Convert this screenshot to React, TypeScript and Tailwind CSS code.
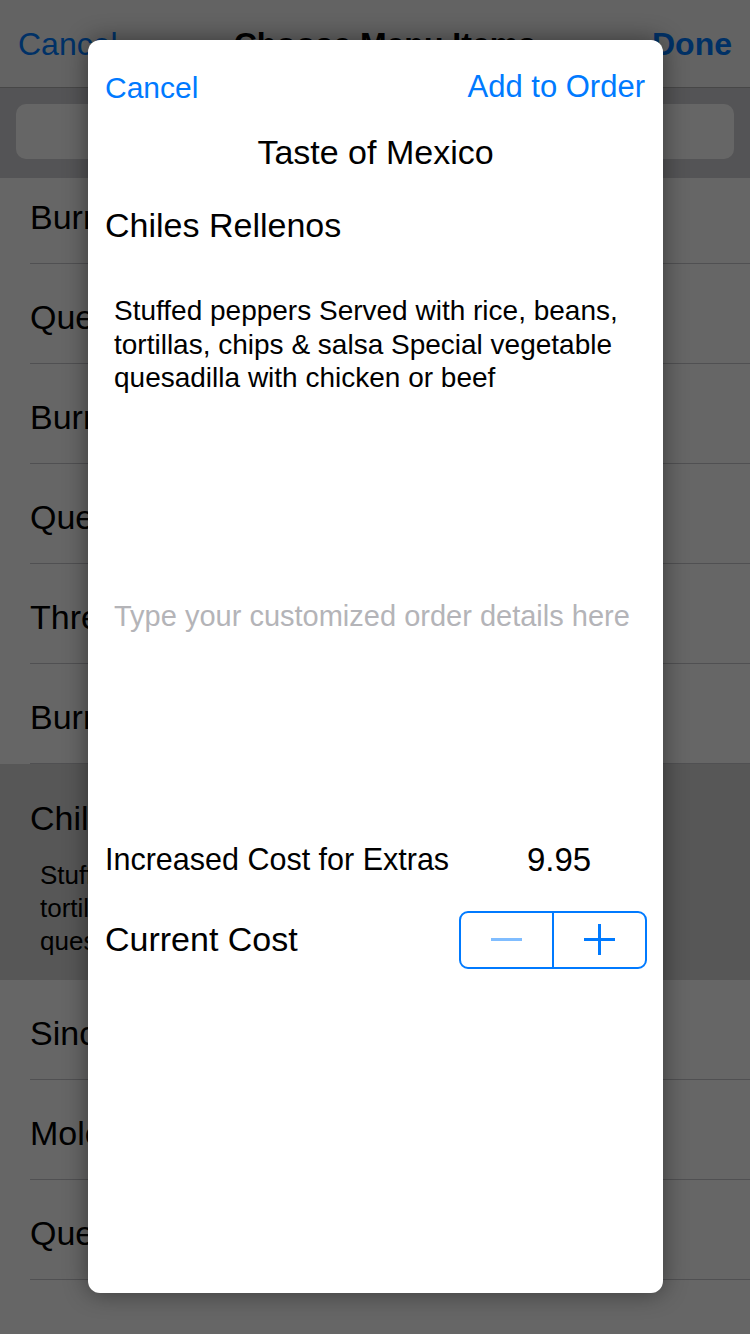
const rows = [
  "Burrito Supreme",
  "Quesadilla",
  "Burrito Mexicano",
  "Quesadilla Suprema",
  "Three Tacos",
  "Burrito Grande",
]

const moreRows = ["Sincronizadas", "Mole Poblano", "Quesadilla Fajita"]

function MenuRow({ name, first }: { name: string; first?: boolean }) {
  return (
    <div className={`${first ? "h-[86px]" : "h-[100px]"} pl-[30px] flex`}>
      <div
        className={`flex-1 flex items-center border-b border-[#c8c7cc] text-[34px] text-black ${
          first ? "pb-[6px]" : "pt-[8px]"
        }`}
      >
        {name}
      </div>
    </div>
  )
}

function Stepper() {
  return (
    <div className="flex w-[188px] h-[58px] border-2 border-[#007aff] rounded-[9px]">
      <div className="flex-1 flex items-center justify-center border-r-2 border-[#007aff]">
        <div className="w-[31px] h-[3px] bg-[#80bdff]" />
      </div>
      <div className="flex-1 flex items-center justify-center">
        <div className="relative w-[31px] h-[31px]">
          <div className="absolute left-0 top-[14px] w-[31px] h-[3px] bg-[#007aff]" />
          <div className="absolute top-0 left-[14px] w-[3px] h-[31px] bg-[#007aff]" />
        </div>
      </div>
    </div>
  )
}

export default function App() {
  return (
    <div className="relative w-[750px] h-[1334px] overflow-hidden bg-white font-['Liberation_Sans',Arial,sans-serif]">
      {/* page underneath */}
      <div className="flex items-center justify-between h-[88px] px-[18px] bg-[#f7f7f7] border-b border-[#b2b2b2]">
        <span className="text-[32px] text-[#007aff]">Cancel</span>
        <span className="text-[32px] font-bold text-black">Choose Menu Items</span>
        <span className="text-[32px] font-bold text-[#007aff]">Done</span>
      </div>
      <div className="h-[90px] px-[16px] pt-[16px] bg-[#d2d2d6]">
        <div className="h-[55px] rounded-[10px] bg-white" />
      </div>
      <div className="flex flex-col">
        {rows.map((r, i) => (
          <MenuRow key={r} name={r} first={i === 0} />
        ))}
        <div className="h-[216px] bg-[#d9d9d9] pl-[30px] pt-[34px]">
          <div className="text-[34px] leading-[40px] text-black">Chiles Rellenos</div>
          <div className="mt-[21px] pl-[10px] w-[560px] text-[26px] leading-[33px] text-black">
            Stuffed peppers Served with rice, beans, tortillas, chips &amp; salsa Special vegetable
            quesadilla with chicken or beef
          </div>
        </div>
        {moreRows.map((r) => (
          <MenuRow key={r} name={r} />
        ))}
      </div>

      {/* dim */}
      <div className="absolute inset-0 bg-black/60" />

      {/* modal */}
      <div className="absolute left-[88px] top-[40px] w-[575px] h-[1253px] rounded-[12px] bg-white shadow-[0_0_24px_rgba(0,0,0,0.45)] px-[17px] pt-[27px] flex flex-col">
        <div className="h-[40px] flex items-center justify-between text-[30px] text-[#007aff]">
          <span>Cancel</span>
          <span className="mr-[1px] text-[31px]">Add to Order</span>
        </div>
        <div className="mt-[25px] h-[40px] leading-[40px] text-center text-[34px] text-black">
          Taste of Mexico
        </div>
        <div className="mt-[33px] h-[40px] leading-[40px] text-[34px] text-black">
          Chiles Rellenos
        </div>
        <p className="mt-[49px] pl-[9px] pr-[10px] text-[28px] leading-[33.5px] text-black">
          Stuffed peppers Served with rice, beans, tortillas, chips &amp; salsa Special vegetable
          quesadilla with chicken or beef
        </p>
        <div className="mt-[204px] pl-[9px] h-[34px] leading-[34px] text-[29px] text-[#b4b4b8]">
          Type your customized order details here
        </div>
        <div className="mt-[207px] h-[40px] flex items-center text-black">
          <span className="w-[422px] text-[30.5px]">Increased Cost for Extras</span>
          <span className="text-[33px]">9.95</span>
        </div>
        <div className="mt-[31px] flex items-center justify-between">
          <span className="text-[34px] text-black">Current Cost</span>
          <div className="-mr-[1px]">
            <Stepper />
          </div>
        </div>
      </div>
    </div>
  )
}
